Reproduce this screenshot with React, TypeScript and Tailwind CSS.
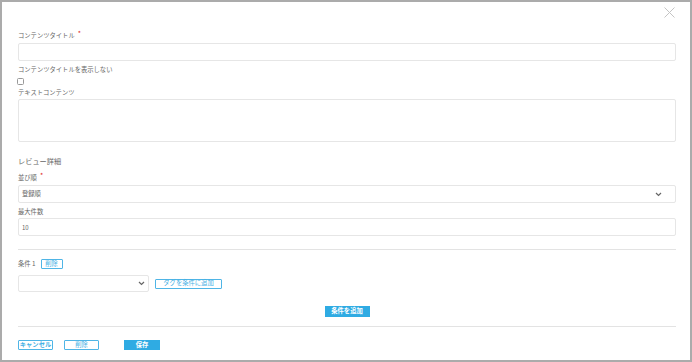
import React from 'react';

const font = { fontFamily: '"Noto Sans CJK JP", "Noto Sans", sans-serif' };

function Label({ text, required }: { text: string; required?: boolean }) {
  return (
    <div className="h-[10px] leading-[12px] text-[6.3px] text-[#666]">
      {text}
      {required && <span className="ml-[3px] text-[7px] text-[#e02020] align-top leading-[6px]">*</span>}
    </div>
  );
}

function Chevron() {
  return (
    <svg width="7" height="5" viewBox="0 0 7 5" className="shrink-0">
      <path d="M1 1 L3.5 3.5 L6 1" fill="none" stroke="#666" strokeWidth="1.2" />
    </svg>
  );
}

function OutlineButton({ text, className }: { text: string; className: string }) {
  return (
    <button
      className={`flex items-center justify-center whitespace-nowrap border border-[#4fb5e6] rounded-[1px] bg-white text-[6.3px] leading-none text-[#45b0e4] ${className}`}
    >
      {text}
    </button>
  );
}

export default function App() {
  return (
    <div style={font} className="relative w-[692px] h-[362px] bg-white border-2 border-[#ababab] pt-[28px] pl-[16px] pr-[14px]">
      <button className="absolute top-[4px] right-[15px] w-[12px] h-[12px] flex items-center justify-center">
        <svg width="11" height="11" viewBox="0 0 11 11">
          <path d="M0.5 0.5 L10.5 10.5 M10.5 0.5 L0.5 10.5" stroke="#c4c4c4" strokeWidth="1" />
        </svg>
      </button>

      <Label text="コンテンツタイトル" required />
      <div className="mt-[3px] h-[18px] border border-[#e6e6e6] rounded-[2px]" />

      <div className="mt-[3px]">
        <Label text="コンテンツタイトルを表示しない" />
      </div>
      <div className="mt-[4px] w-[7px] h-[7px] border border-[#999] rounded-[1.5px] -ml-[1px]" />

      <div className="mt-[2px]">
        <Label text="テキストコンテンツ" />
      </div>
      <div className="mt-[2px] h-[43px] border border-[#e6e6e6] rounded-[2px]" />

      <div className="mt-[13px] h-[12px] leading-[13px] text-[7.2px] text-[#666]">レビュー詳細</div>

      <div className="mt-[5px]">
        <Label text="並び順" required />
      </div>
      <div className="mt-[3px] h-[18px] border border-[#e6e6e6] rounded-[2px] flex items-center justify-between pl-[3px] pr-[13px]">
        <span className="text-[6.3px] text-[#666]">登録順</span>
        <Chevron />
      </div>

      <div className="mt-[3px]">
        <Label text="最大件数" />
      </div>
      <div className="mt-[2px] h-[18px] border border-[#e6e6e6] rounded-[2px] flex items-center pl-[3px]">
        <span className="text-[6px] text-[#666]">10</span>
      </div>

      <div className="mt-[13px] border-t border-[#e3e3e3]" />

      <div className="mt-[9px] flex items-center gap-[5px]">
        <span className="text-[6.3px] leading-[10px] text-[#666]">条件 1</span>
        <OutlineButton text="削除" className="w-[22px] h-[10px]" />
      </div>

      <div className="mt-[6px] flex items-center gap-[6px]">
        <div className="w-[131px] h-[17px] border border-[#e6e6e6] rounded-[2px] flex items-center justify-end pr-[3px]">
          <Chevron />
        </div>
        <OutlineButton text="タグを条件に追加" className="w-[67px] h-[10px]" />
      </div>

      <div className="mt-[14px] flex justify-center">
        <button className="w-[45px] h-[11px] bg-[#2fabe3] text-white text-[6.3px] font-bold leading-none flex items-center justify-center">
          条件を追加
        </button>
      </div>

      <div className="mt-[9px] border-t border-[#e3e3e3]" />

      <div className="mt-[13px] flex items-center">
        <OutlineButton text="キャンセル" className="w-[35px] h-[10px] font-bold" />
        <OutlineButton text="削除" className="w-[35px] h-[10px] ml-[11px]" />
        <button className="ml-[25px] w-[36px] h-[10px] bg-[#2fabe3] text-white text-[6.3px] font-bold leading-none flex items-center justify-center">
          保存
        </button>
      </div>
    </div>
  );
}
